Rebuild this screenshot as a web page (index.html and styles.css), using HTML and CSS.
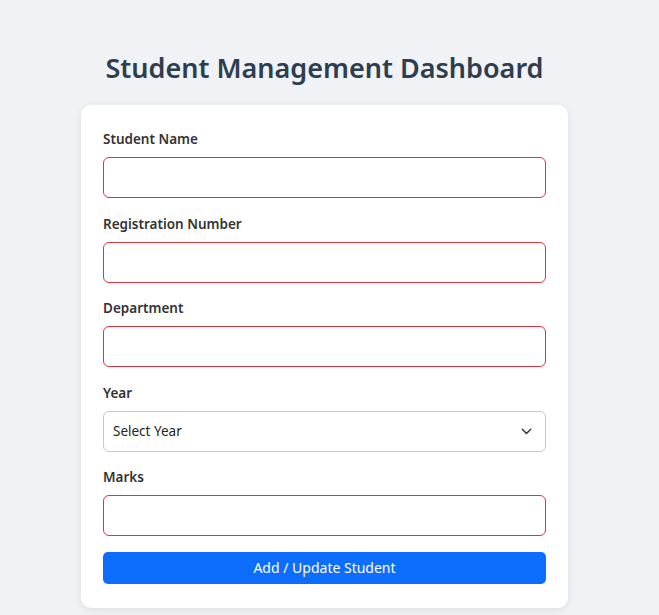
FILE: index.html
```html
<!DOCTYPE html>
<html>
<head>
<meta charset="utf-8">
<link rel="stylesheet" href="styles.css">
</head>
<body>
<main class="page">
  <h1 class="title">Student Management Dashboard</h1>
  <form class="card">
    <div class="group">
      <label class="label">Student Name</label>
      <input class="field invalid" type="text">
    </div>
    <div class="group">
      <label class="label">Registration Number</label>
      <input class="field invalid" type="text">
    </div>
    <div class="group">
      <label class="label">Department</label>
      <input class="field invalid" type="text">
    </div>
    <div class="group">
      <label class="label">Year</label>
      <div class="select-wrap">
        <select class="field select">
          <option>Select Year</option>
        </select>
        <svg class="chev" width="11" height="7" viewBox="0 0 11 7"><path d="M1.3 1.3 5.5 5.5l4.2-4.2" fill="none" stroke="#343a40" stroke-width="1.5" stroke-linecap="round" stroke-linejoin="round"/></svg>
      </div>
    </div>
    <div class="group">
      <label class="label">Marks</label>
      <input class="field invalid" type="text">
    </div>
    <button class="btn" type="button">Add / Update Student</button>
  </form>
</main>
</body>
</html>
```
FILE: styles.css
```css
* { box-sizing: border-box; }
html, body { margin: 0; }
body {
  background: #f0f2f5;
  font-family: "Noto Sans", "Open Sans", sans-serif;
  color: #343a40;
  min-height: 615px;
}
.page {
  width: 487px;
  margin: 0 auto;
  padding-top: 47px;
  transform: translateX(-5px);
}
.title {
  margin: 0 0 16px;
  text-align: center;
  font-size: 27px;
  line-height: 42px;
  font-weight: 600;
  color: #2c3e50;
}
.card {
  background: #fff;
  border-radius: 10px;
  box-shadow: 0 2px 10px rgba(0,0,0,0.08);
  padding: 24px 22px 24px;
  display: flex;
  flex-direction: column;
}
.group {
  display: flex;
  flex-direction: column;
  margin-bottom: 15.5px;
}
.label {
  font-size: 13.5px;
  line-height: 20px;
  font-weight: 600;
  color: #333;
  margin-bottom: 8px;
}
.field {
  width: 100%;
  height: 41px;
  border: 1px solid #ced4da;
  border-radius: 6px;
  background: #fff;
  font-family: inherit;
  font-size: 13.5px;
  padding: 0 9px;
  color: #212529;
  outline: none;
}
.invalid { border-color: #dc3545; }
.select-wrap { position: relative; }
.select {
  appearance: none;
  -webkit-appearance: none;
  border-color: #c8c8c8;
}
.chev {
  position: absolute;
  right: 14px;
  top: 17px;
  pointer-events: none;
}
.btn {
  height: 32px;
  border: 0;
  border-radius: 5px;
  background: #0d6efd;
  color: #fff;
  font-family: inherit;
  font-size: 14px;
  cursor: pointer;
}
```
